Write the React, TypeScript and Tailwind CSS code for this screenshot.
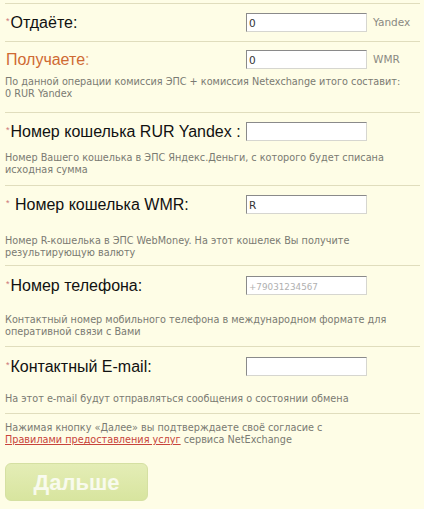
import React from "react";

const Sep = () => <div className="ml-[5px] mr-[4px] h-px bg-[#e0ddbd]" />;

const Hint = ({ children, className = "" }: { children: React.ReactNode; className?: string }) => (
  <p className={`pl-[5px] pr-2 text-[9.7px] leading-[12px] text-[#7a7a72] ${className}`} style={{ fontFamily: '"DejaVu Sans", Verdana, sans-serif' }}>
    {children}
  </p>
);

const Field = ({ value = "", placeholder = "" }: { value?: string; placeholder?: string }) => (
  <input
    readOnly
    value={value}
    placeholder={placeholder}
    className="h-[19px] w-[121px] border border-t-[#8a8a8a] border-l-[#8a8a8a] border-r-[#d6d6d0] border-b-[#d6d6d0] bg-white px-[2px] text-[10.5px] text-[#333] placeholder:text-[#b0b0b0] placeholder:text-[8.8px] outline-none"
    style={{ fontFamily: '"DejaVu Sans", Verdana, sans-serif' }}
  />
);

const Star = () => <span className="relative -top-[4px] mr-[1px] text-[9px] leading-[0] text-[#c77]">*</span>;

const Row = ({
  label,
  field,
  suffix,
  className = "",
}: {
  label: React.ReactNode;
  field: React.ReactNode;
  suffix?: string;
  className?: string;
}) => (
  <div className={`flex items-center pl-[6px] ${className}`}>
    <div className="h-[19px] w-[240px] shrink-0 whitespace-nowrap text-[16px] leading-[19px] text-[#111]">{label}</div>
    {field}
    {suffix && (
      <span className="ml-[6px] text-[10.5px] text-[#8a8a82]" style={{ fontFamily: '"DejaVu Sans", Verdana, sans-serif' }}>
        {suffix}
      </span>
    )}
  </div>
);

export default function App() {
  return (
    <div className="h-[509px] w-[424px] overflow-hidden bg-[#fefde6] pt-[3px]" style={{ fontFamily: '"Liberation Sans", Arial, sans-serif' }}>
      <Sep />
      <Row className="h-[37px]" label={<><Star />Отдаёте:</>} field={<Field value="0" />} suffix="Yandex" />
      <Sep />

      <div className="pt-[8px] pb-[12px]">
        <Row
          label={
            <span className="text-[#cf6a33]">
              Получаете<span className="text-[#e0a070]">:</span>
            </span>
          }
          field={<Field value="0" />}
          suffix="WMR"
        />
        <Hint className="mt-[7px]">
          По данной операции комиссия ЭПС + комиссия Netexchange итого составит:
          <br />0 RUR Yandex
        </Hint>
      </div>
      <Sep />

      <div className="pt-[9px] pb-[9px]">
        <Row label={<><Star />Номер кошелька RUR Yandex :</>} field={<Field />} />
        <Hint className="mt-[11px]">
          Номер Вашего кошелька в ЭПС Яндекс.Деньги, с которого будет списана
          <br />
          исходная сумма
        </Hint>
      </div>
      <Sep />

      <div className="pt-[9px] pb-[6px]">
        <Row label={<><Star /> Номер кошелька WMR:</>} field={<Field value="R" />} />
        <Hint className="mt-[21px]">
          Номер R-кошелька в ЭПС WebMoney. На этот кошелек Вы получите
          <br />
          результирующую валюту
        </Hint>
      </div>
      <Sep />

      <div className="pt-[10px] pb-[8px]">
        <Row label={<><Star />Номер телефона:</>} field={<Field placeholder="+79031234567" />} />
        <Hint className="mt-[19px]">
          Контактный номер мобильного телефона в международном формате для
          <br />
          оперативной связи с Вами
        </Hint>
      </div>
      <Sep />

      <div className="pt-[10px] pb-[8px]">
        <Row label={<><Star />Контактный E-mail:</>} field={<Field />} />
        <Hint className="mt-[17px]">На этот e-mail будут отправляться сообщения о состоянии обмена</Hint>
      </div>
      <Sep />

      <div className="pt-[8px]">
        <Hint>
          Нажимая кнопку «Далее» вы подтверждаете своё согласие с
          <br />
          <a className="text-[#c8443a] underline">Правилами предоставления услуг</a> сервиса NetExchange
        </Hint>
        <div className="pl-[5px] pt-[17px]">
          <button className="flex h-[38px] w-[143px] items-center justify-center rounded-[6px] border border-[#d5e0a2] bg-gradient-to-b from-[#e4edb6] to-[#d8e59f] text-[22px] font-bold text-white/80">
            Дальше
          </button>
        </div>
      </div>
    </div>
  );
}
